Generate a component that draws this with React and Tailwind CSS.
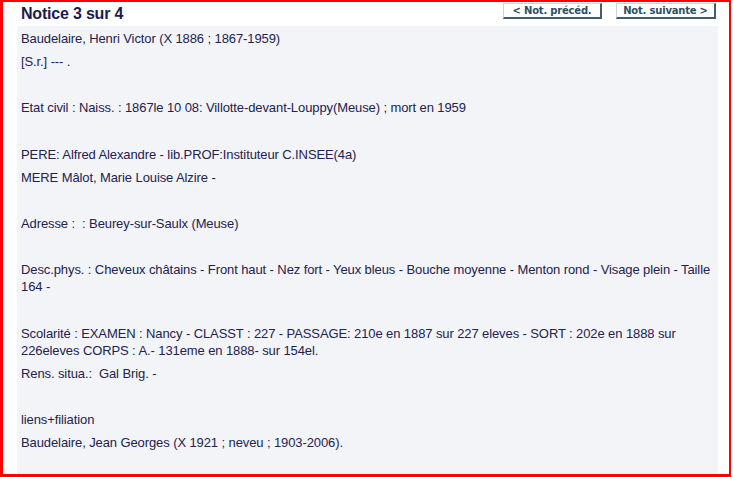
export default function App() {
  const rows = [
    'Baudelaire, Henri Victor (X 1886 ; 1867-1959)',
    '[S.r.] --- .',
    '',
    'Etat civil : Naiss. : 1867le 10 08: Villotte-devant-Louppy(Meuse) ; mort en 1959',
    '',
    'PERE: Alfred Alexandre - lib.PROF:Instituteur C.INSEE(4a)',
    'MERE Mâlot, Marie Louise Alzire -',
    '',
    'Adresse :  : Beurey-sur-Saulx (Meuse)',
    '',
    'Desc.phys. : Cheveux châtains - Front haut - Nez fort - Yeux bleus - Bouche moyenne - Menton rond - Visage plein - Taille 164 -',
    '',
    'Scolarité : EXAMEN : Nancy - CLASST : 227 - PASSAGE: 210e en 1887 sur 227 eleves - SORT : 202e en 1888 sur 226eleves CORPS : A.- 131eme en 1888- sur 154el.',
    'Rens. situa.:  Gal Brig. -',
    '',
    'liens+filiation',
    'Baudelaire, Jean Georges (X 1921 ; neveu ; 1903-2006).',
  ]

  return (
    <div className="w-[733px] h-[477px] bg-white overflow-hidden">
      {/* red frame */}
      <div className="w-[731px] h-[477px] border-l-[3px] border-t-2 border-r-2 border-b-[3px] border-[#ff0000] flex flex-col">
        {/* header */}
        <div className="flex items-start h-[24px] pl-[15px] pr-[13px]">
          <h1 className="mt-[2px] ml-[3px] text-[16px] leading-[20px] font-bold text-[#1c1c4e] font-['Liberation_Sans',Arial,sans-serif] tracking-[-0.2px]">
            Notice 3 sur 4
          </h1>
          <div className="ml-auto flex gap-[14px] mt-[1px]">
            <button className="w-[99px] h-[16px] bg-white border border-t-[#c9d6dc] border-l-[#c9d6dc] border-r-[#3f5f6f] border-b-[#3f5f6f] border-r-2 border-b-2 text-[10px] leading-[12px] font-bold text-[#2d4f60] font-['DejaVu_Sans',Verdana,sans-serif] tracking-[-0.2px]">
              &lt; Not. précéd.
            </button>
            <button className="w-[100px] h-[16px] bg-white border border-t-[#c9d6dc] border-l-[#c9d6dc] border-r-[#3f5f6f] border-b-[#3f5f6f] border-r-2 border-b-2 text-[10px] leading-[12px] font-bold text-[#2d4f60] font-['DejaVu_Sans',Verdana,sans-serif] tracking-[-0.2px]">
              Not. suivante &gt;
            </button>
          </div>
        </div>

        {/* record */}
        <div className="ml-[14px] w-[701px] flex-1 bg-[#f3f4f8] pl-[4px] pr-[2px] pt-[4px] font-['Liberation_Sans',Arial,sans-serif] text-[13px] leading-[17px] tracking-[-0.1px] text-[#22224e] whitespace-pre-wrap">
          {rows.map((r, i) =>
            r ? (
              <p key={i} className="mb-[6.15px]">{r}</p>
            ) : (
              <div key={i} className="h-[17px] mb-[6.15px]" />
            )
          )}
        </div>
      </div>
    </div>
  )
}
